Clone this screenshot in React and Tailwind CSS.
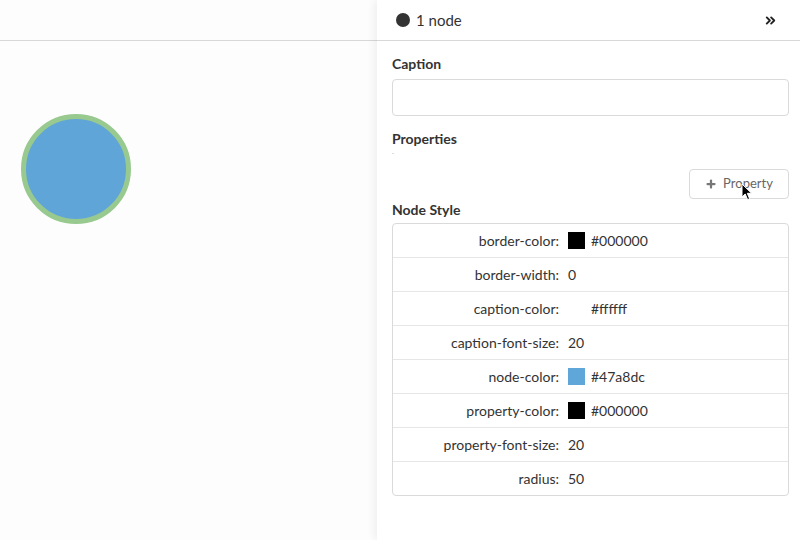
import { ChevronsRight, Plus } from "lucide-react";

const styleRows = [
  { key: "border-color", value: "#000000", swatch: "#000000" },
  { key: "border-width", value: "0" },
  { key: "caption-color", value: "#ffffff", swatch: "#ffffff" },
  { key: "caption-font-size", value: "20" },
  { key: "node-color", value: "#47a8dc", swatch: "#5ea7d8" },
  { key: "property-color", value: "#000000", swatch: "#000000" },
  { key: "property-font-size", value: "20" },
  { key: "radius", value: "50" },
];

function Cursor() {
  return (
    <svg className="absolute left-[741px] top-[183px] z-20" width="12" height="18" viewBox="0 0 12 18">
      <path d="M1 1 L1 14 L4.2 11 L6.6 16.6 L8.6 15.7 L6.3 10.3 L10.6 10.3 Z" fill="#000" stroke="#fff" strokeWidth="1" />
    </svg>
  );
}

export default function App() {
  return (
    <div className="relative flex h-[540px] w-[800px] overflow-hidden bg-[#fdfdfd] text-[#333] font-['Lato','Liberation_Sans',sans-serif]">
      <div className="flex-1">
        <div className="h-[41px] border-b border-[#d8d8d8]" />
        <div className="pl-[21px] pt-[73px]">
          <div className="h-[110px] w-[110px] rounded-full border-[5px] border-[#98c98f] bg-[#5fa5d8]" />
        </div>
      </div>

      <div className="relative z-10 flex w-[423px] flex-col bg-white shadow-[-3px_0_8px_rgba(0,0,0,0.06)]">
        <div className="flex h-[41px] items-center justify-between border-b border-[#d8d8d8] pl-[19px] pr-[22px]">
          <div className="flex items-center gap-[6px] text-[15px]">
            <span className="h-[14px] w-[14px] rounded-full bg-[#333]" />
            <span>1 node</span>
          </div>
          <ChevronsRight size={15} strokeWidth={3} className="text-[#222]" />
        </div>

        <div className="flex flex-col pl-[15px] pr-[11px]">
          <div className="mt-[12px] text-[14px] font-bold">Caption</div>
          <div className="mt-[5px] h-[37px] rounded-[4px] border border-[#dadada] bg-white" />

          <div className="mt-[12px] text-[14px] font-bold">Properties</div>
          <div className="mt-[4px] h-[1px] w-[2px] bg-[#ddd]" />

          <div className="mt-[15px] flex justify-end">
            <button type="button" className="flex h-[30px] w-[100px] items-center justify-center gap-[6px] rounded-[4px] border border-[#dadada] bg-white text-[13px] text-[#666]">
              <Plus size={12} strokeWidth={4.5} className="text-[#777]" />
              Property
            </button>
          </div>

          <div className="text-[14px] font-bold">Node Style</div>
          <div className="mt-[3px] rounded-[4px] border border-[#dadada]">
            {styleRows.map((row, i) => (
              <div key={row.key} className={`flex items-center text-[14px] ${i > 0 ? "h-[34px] border-t border-[#e6e6e6]" : "h-[33px]"}`}>
                <div className="w-[166px] text-right">{row.key}:</div>
                <div className="ml-[9px] flex items-center gap-[6px]">
                  {row.swatch && <span className="h-[17px] w-[17px]" style={{ backgroundColor: row.swatch }} />}
                  <span>{row.value}</span>
                </div>
              </div>
            ))}
          </div>
        </div>
      </div>
      <Cursor />
    </div>
  );
}
